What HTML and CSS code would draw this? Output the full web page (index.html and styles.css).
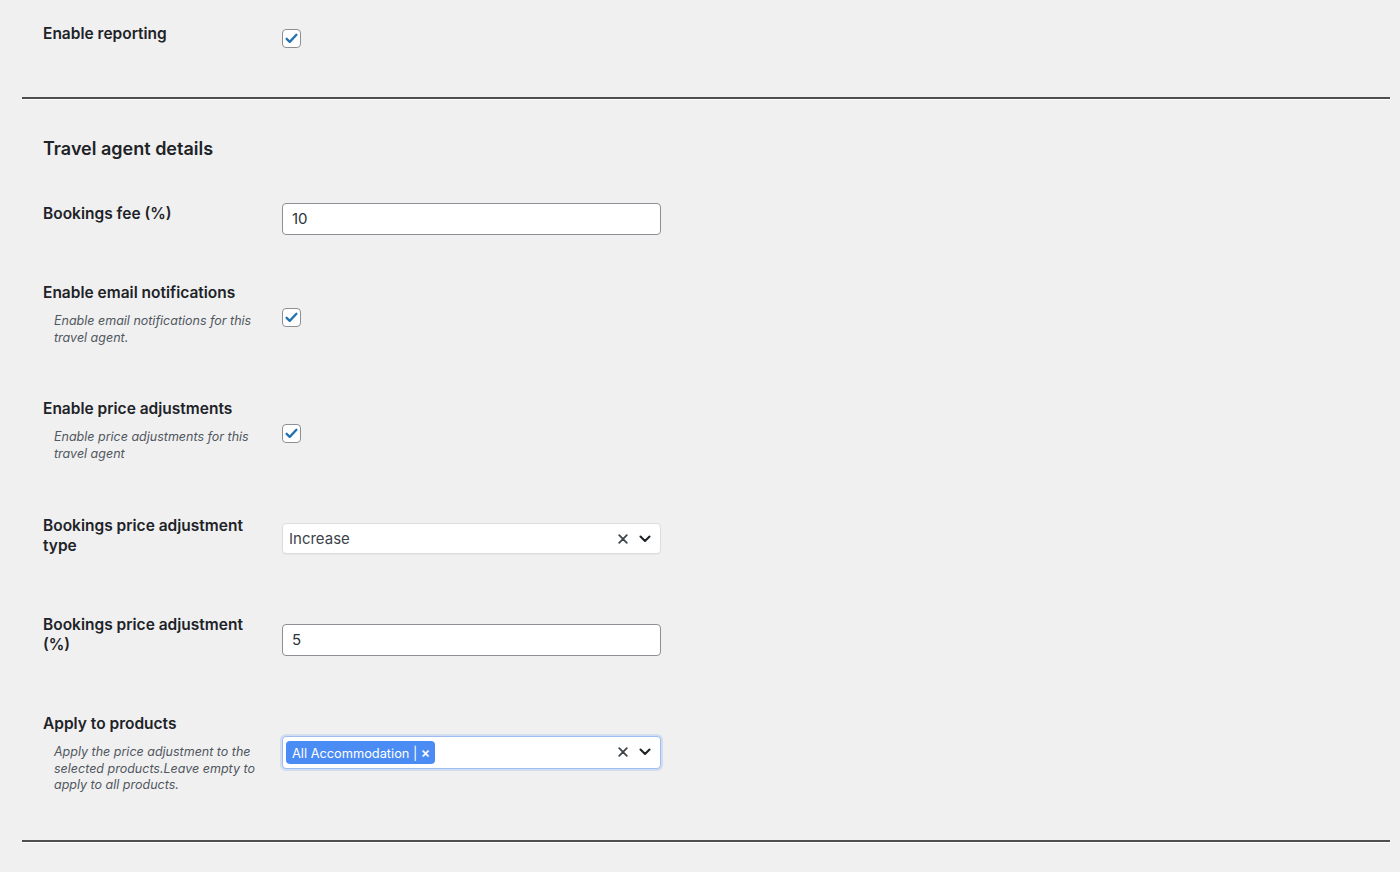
FILE: index.html
```html
<!DOCTYPE html>
<html lang="en">
<head>
<meta charset="utf-8">
<title>Travel agent settings</title>
<link rel="stylesheet" href="styles.css">
</head>
<body>
<div class="page">
  <div class="row row--first">
    <div class="label"><span class="label-title">Enable reporting</span></div>
    <div class="field">
      <span class="checkbox"><svg viewBox="0 0 20 20" width="17" height="17"><path d="M4.3 10.4l3.6 3.6L15.8 5.6" stroke="#2271b1" stroke-width="2.7" fill="none" stroke-linecap="round" stroke-linejoin="round"/></svg></span>
    </div>
  </div>

  <div class="sep"></div>

  <h2 class="section-title">Travel agent details</h2>

  <div class="row row--fee">
    <div class="label"><span class="label-title">Bookings fee (%)</span></div>
    <div class="field"><div class="text-input">10</div></div>
  </div>

  <div class="row row--email">
    <div class="label">
      <span class="label-title">Enable email notifications</span>
      <p class="desc">Enable email notifications for this travel agent.</p>
    </div>
    <div class="field field--desc">
      <span class="checkbox"><svg viewBox="0 0 20 20" width="17" height="17"><path d="M4.3 10.4l3.6 3.6L15.8 5.6" stroke="#2271b1" stroke-width="2.7" fill="none" stroke-linecap="round" stroke-linejoin="round"/></svg></span>
    </div>
  </div>

  <div class="row row--price">
    <div class="label">
      <span class="label-title">Enable price adjustments</span>
      <p class="desc">Enable price adjustments for this travel agent</p>
    </div>
    <div class="field field--desc">
      <span class="checkbox"><svg viewBox="0 0 20 20" width="17" height="17"><path d="M4.3 10.4l3.6 3.6L15.8 5.6" stroke="#2271b1" stroke-width="2.7" fill="none" stroke-linecap="round" stroke-linejoin="round"/></svg></span>
    </div>
  </div>

  <div class="row row--wide">
    <div class="label"><span class="label-title">Bookings price adjustment type</span></div>
    <div class="field field--select">
      <div class="select">
        <span class="select-value">Increase</span>
        <span class="select-clear"><svg viewBox="0 0 10 10" width="10" height="10"><path d="M1.2 1.2L8.8 8.8M8.8 1.2L1.2 8.8" stroke="#3c434a" stroke-width="1.7" stroke-linecap="round"/></svg></span>
        <span class="select-arrow"><svg viewBox="0 0 12 8" width="12" height="8"><path d="M1.5 1.5L6 6L10.5 1.5" stroke="#1d2327" stroke-width="2.1" fill="none" stroke-linecap="round" stroke-linejoin="round"/></svg></span>
      </div>
    </div>
  </div>

  <div class="row row--pct">
    <div class="label"><span class="label-title">Bookings price adjustment (%)</span></div>
    <div class="field"><div class="text-input">5</div></div>
  </div>

  <div class="row row--last">
    <div class="label">
      <span class="label-title">Apply to products</span>
      <p class="desc">Apply the price adjustment to the selected products.Leave empty to apply to all products.</p>
    </div>
    <div class="field field--tags">
      <div class="select select--focus">
        <span class="tag">All Accommodation <span class="tag-bar">|</span> <span class="tag-x">×</span></span>
        <span class="select-fill"></span>
        <span class="select-clear"><svg viewBox="0 0 10 10" width="10" height="10"><path d="M1.2 1.2L8.8 8.8M8.8 1.2L1.2 8.8" stroke="#3c434a" stroke-width="1.7" stroke-linecap="round"/></svg></span>
        <span class="select-arrow"><svg viewBox="0 0 12 8" width="12" height="8"><path d="M1.5 1.5L6 6L10.5 1.5" stroke="#1d2327" stroke-width="2.1" fill="none" stroke-linecap="round" stroke-linejoin="round"/></svg></span>
      </div>
    </div>
  </div>

  <div class="sep"></div>
</div>
</body>
</html>
```

FILE: styles.css
```css
html, body {
  margin: 0;
  padding: 0;
  background: #f0f0f1;
}

body {
  font-family: Inter, "Open Sans", "Liberation Sans", sans-serif;
  color: #1d2327;
  height: 872px;
  overflow: hidden;
}

.page {
  margin: 0 10px 0 22px;
}

.row {
  display: grid;
  grid-template-columns: 239px 379px;
  align-items: center;
  padding: 27px 0 27px 21px;
}

.row--first {
  padding: 19px 0 49px 21px;
}

.row--fee {
  padding-bottom: 21px;
}

.row--email {
  padding-bottom: 26px;
}

.row--price {
  padding-bottom: 27px;
}

.row--wide {
  padding-bottom: 31px;
}

.row--pct {
  padding-bottom: 31px;
}

.row--last {
  padding-bottom: 46px;
}

.label-title {
  display: block;
  font-size: 15.5px;
  font-weight: 600;
  line-height: 20px;
  width: 212px;
}

.desc {
  margin: 10px 0 0 11px;
  width: 210px;
  font-size: 12.5px;
  line-height: 16.5px;
  font-style: italic;
  color: #50575e;
}

.field {
  padding-top: 10px;
}

.field--desc {
  padding-top: 6px;
}

.field--select {
  padding-top: 5px;
}

.field--tags {
  padding-top: 0;
  margin-top: -3px;
}

.sep {
  height: 2px;
  background: #4f4f4f;
  box-shadow: 0 1px 0 #ffffff;
}

.section-title {
  margin: 38px 0 5px 21px;
  font-size: 18px;
  line-height: 24px;
  font-weight: 600;
  color: #1d2327;
}

.checkbox {
  display: flex;
  align-items: center;
  justify-content: center;
  width: 17px;
  height: 17px;
  border: 1px solid #8c8f94;
  border-radius: 4px;
  background: #fff;
}

.text-input {
  box-sizing: border-box;
  height: 32px;
  border: 1px solid #8c8f94;
  border-radius: 4px;
  background: #fff;
  padding: 0 9px;
  font-size: 15px;
  line-height: 30px;
  color: #2c3338;
}

.select {
  box-sizing: border-box;
  display: flex;
  align-items: center;
  height: 31px;
  border: 1px solid #dcdcde;
  border-radius: 4px;
  background: #fff;
  padding: 0 9px 0 6px;
  box-shadow: 0 1px 1px rgba(0, 0, 0, 0.04);
}

.select--focus {
  height: 33px;
  padding-left: 3px;
  border-color: #9dbdf0;
  box-shadow: 0 0 0 2px rgba(120, 165, 235, 0.25);
}

.select-value {
  flex: 1;
  font-size: 15px;
  color: #3c434a;
}

.select-fill {
  flex: 1;
}

.select-clear {
  display: flex;
  margin-right: 11px;
}

.select-arrow {
  display: flex;
}

.tag {
  display: inline-block;
  height: 23px;
  line-height: 23px;
  padding: 0 5px 0 6px;
  border-radius: 4px;
  background: #4a8cf3;
  color: #fff;
  font-size: 12.8px;
  white-space: nowrap;
}

.tag-x {
  font-size: 14px;
  font-weight: 600;
}
```
